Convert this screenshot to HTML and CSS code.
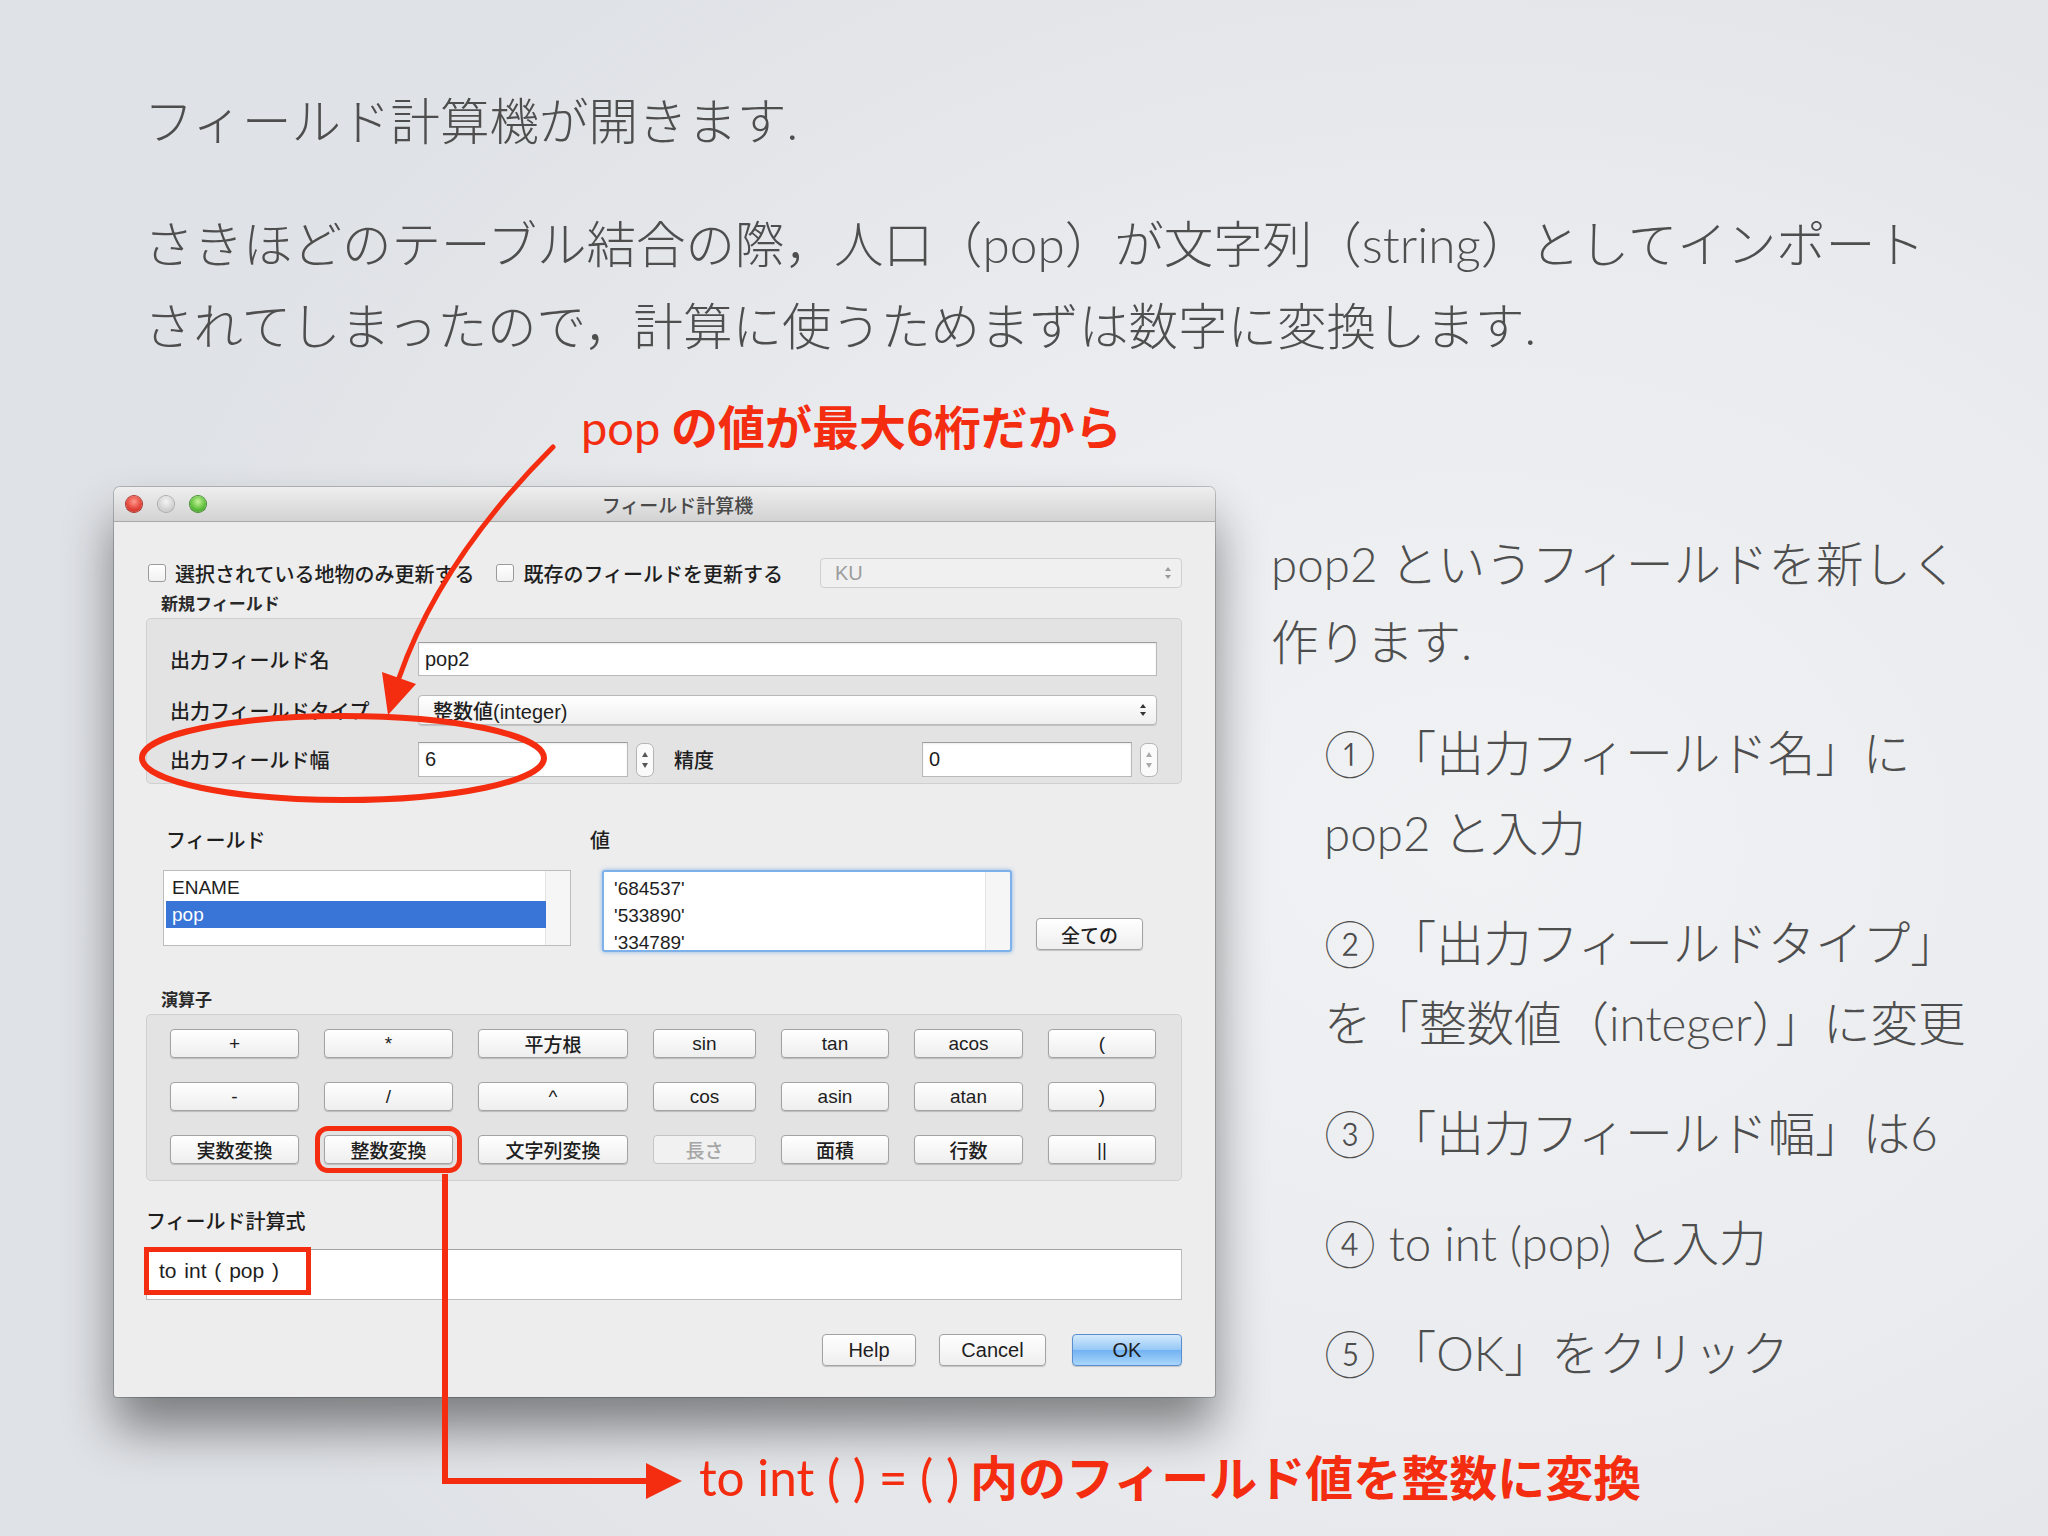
FILE: index.html
```html
<!DOCTYPE html>
<html lang="ja">
<head>
  <meta charset="UTF-8">
  <title>フィールド計算機</title>
  <link rel="stylesheet" href="styles.css">
</head>
<body>
<div class="slide">

  <div class="intro">
    <p>フィールド計算機が開きます.</p>
    <p>さきほどのテーブル結合の際，人口（pop）が文字列（string）としてインポート<br>されてしまったので，計算に使うためまずは数字に変換します.</p>
  </div>

  <div class="main">
    <div class="dialog">
      <div class="titlebar">
        <div class="lights">
          <span class="light red"></span>
          <span class="light gray"></span>
          <span class="light green"></span>
        </div>
        <div class="title">フィールド計算機</div>
      </div>

      <div class="dlg-body">
        <div class="opts">
          <label class="check"><span class="box"></span>選択されている地物のみ更新する</label>
          <label class="check"><span class="box"></span>既存のフィールドを更新する</label>
          <div class="combo disabled">
            <span>KU</span>
            <svg class="updown" width="8" height="14" viewBox="0 0 8 14"><path d="M1 5 L4 1 L7 5 Z M1 9 L4 13 L7 9 Z" fill="#9a9a9a"/></svg>
          </div>
        </div>

        <div class="group-label">新規フィールド</div>
        <div class="group new-field">
          <div class="frow">
            <span class="flabel">出力フィールド名</span>
            <div class="input">pop2</div>
          </div>
          <div class="frow type-row">
            <span class="flabel">出力フィールドタイプ</span>
            <div class="combo">
              <span>整数値(integer)</span>
              <svg class="updown" width="8" height="14" viewBox="0 0 8 14"><path d="M1 5 L4 1 L7 5 Z M1 9 L4 13 L7 9 Z" fill="#333"/></svg>
            </div>
          </div>
          <div class="frow width-row">
            <span class="flabel">出力フィールド幅</span>
            <div class="input spin">6</div>
            <svg class="stepper" width="18" height="34" viewBox="0 0 18 34"><rect x="0.5" y="0.5" width="17" height="33" rx="6" fill="#fafafa" stroke="#b3b3b3"/><path d="M6 14 L9 9 L12 14 Z M6 20 L9 25 L12 20 Z" fill="#555"/></svg>
            <span class="flabel plabel">精度</span>
            <div class="input spin">0</div>
            <svg class="stepper" width="18" height="34" viewBox="0 0 18 34"><rect x="0.5" y="0.5" width="17" height="33" rx="6" fill="#fafafa" stroke="#b3b3b3"/><path d="M6 14 L9 9 L12 14 Z M6 20 L9 25 L12 20 Z" fill="#aaa"/></svg>
          </div>
        </div>

        <div class="lists">
          <div class="col fields">
            <div class="sec-label">フィールド</div>
            <div class="listbox">
              <div class="item">ENAME</div>
              <div class="item selected">pop</div>
            </div>
          </div>
          <div class="col values">
            <div class="sec-label">値</div>
            <div class="listbox focus">
              <div class="item">'684537'</div>
              <div class="item">'533890'</div>
              <div class="item">'334789'</div>
            </div>
          </div>
          <button class="btn all">全ての</button>
        </div>

        <div class="group-label ops-label">演算子</div>
        <div class="group ops">
          <button class="btn">+</button>
          <button class="btn">*</button>
          <button class="btn">平方根</button>
          <button class="btn">sin</button>
          <button class="btn">tan</button>
          <button class="btn">acos</button>
          <button class="btn">(</button>
          <button class="btn">-</button>
          <button class="btn">/</button>
          <button class="btn">^</button>
          <button class="btn">cos</button>
          <button class="btn">asin</button>
          <button class="btn">atan</button>
          <button class="btn">)</button>
          <button class="btn">実数変換</button>
          <button class="btn marked">整数変換</button>
          <button class="btn">文字列変換</button>
          <button class="btn" disabled>長さ</button>
          <button class="btn">面積</button>
          <button class="btn">行数</button>
          <button class="btn">||</button>
        </div>

        <div class="sec-label expr-label">フィールド計算式</div>
        <div class="expr"><span class="mark">to int ( pop )</span></div>

        <div class="actions">
          <button class="btn help">Help</button>
          <button class="btn cancel">Cancel</button>
          <button class="btn ok">OK</button>
        </div>
      </div>
    </div>

    <div class="notes">
      <p class="lead">pop2 というフィールドを新しく<br>作ります.</p>
      <ol>
        <li>① 「出力フィールド名」に<br>pop2 と入力</li>
        <li>② 「出力フィールドタイプ」<br>を「整数値（integer）」に変更</li>
        <li>③ 「出力フィールド幅」は6</li>
        <li>④ to int (pop) と入力</li>
        <li>⑤ 「OK」をクリック</li>
      </ol>
    </div>
  </div>

  <div class="note note-top"><span class="lat">pop</span> の値が最大6桁だから</div>
  <div class="note note-bottom"><span class="lat">to int ( ) = ( )</span> 内のフィールド値を整数に変換</div>

  <svg class="marks" width="2048" height="1536" viewBox="0 0 2048 1536">
    <path d="M553 447 Q440 560 399 678" fill="none" stroke="#f42c10" stroke-width="5" stroke-linecap="round"/>
    <polygon points="388,715 416,684 382,672" fill="#f42c10"/>
    <ellipse cx="343" cy="758" rx="201" ry="42" fill="none" stroke="#f42c10" stroke-width="6"/>
    <path d="M445 1174 V1481 H650" fill="none" stroke="#f42c10" stroke-width="6"/>
    <polygon points="682,1481 646,1463 646,1499" fill="#f42c10"/>
  </svg>
</div>
</body>
</html>
```

FILE: styles.css
```css
* {
  box-sizing: border-box;
}
body {
  margin: 0;
  background: #e4e6e9;
}
.slide {
  position: relative;
  width: 2048px;
  height: 1536px;
  overflow: hidden;
  background: radial-gradient(ellipse 1400px 1100px at 72% 55%, #f1f2f4 0%, #e9ebee 55%, #dfe2e6 100%);
  font-family: "Lato", "Noto Sans CJK JP", sans-serif;
  font-weight: 300;
  color: #4e4e4e;
}

/* text on the slide */
.intro {
  padding: 80px 0 0 144px;
}
.intro p {
  margin: 0;
  font-size: 49.5px;
  line-height: 82px;
  white-space: nowrap;
}
.intro p + p {
  margin-top: 41px;
}
.main {
  display: flex;
  align-items: flex-start;
  margin-top: 120px;
  padding-left: 114px;
}
.notes {
  margin: 38px 0 0 56px;
  font-size: 47.5px;
  white-space: nowrap;
}
.notes .lead {
  margin: 0;
  line-height: 78px;
}
.notes ol {
  list-style: none;
  margin: 32px 0 0;
  padding-left: 53px;
}
.notes li {
  line-height: 80px;
}
.notes li + li {
  margin-top: 30px;
}

/* red annotations */
.note {
  position: absolute;
  font-family: "Noto Sans CJK JP", sans-serif;
  font-weight: 700;
  line-height: 56px;
  color: #f42c10;
  white-space: nowrap;
}
.note .lat {
  font-family: "Lato", "Noto Sans CJK JP", sans-serif;
  font-weight: 400;
}
.note-top {
  left: 581px;
  top: 397px;
  font-size: 47px;
}
.note-bottom {
  left: 699px;
  top: 1447px;
  font-size: 48px;
}
.note-bottom .lat {
  font-size: 49.5px;
}
.marks {
  position: absolute;
  left: 0;
  top: 0;
  pointer-events: none;
}

/* dialog window */
.dialog {
  width: 1101px;
  height: 910px;
  background: #ededed;
  border-radius: 6px 6px 3px 3px;
  box-shadow: 0 32px 50px rgba(0, 0, 0, 0.45), 0 0 0 1px rgba(0, 0, 0, 0.2);
  font-family: "Liberation Sans", "Noto Sans CJK JP", sans-serif;
  font-weight: 500;
  font-size: 20px;
  color: #1e1e1e;
}
.titlebar {
  display: flex;
  align-items: center;
  height: 35px;
  padding: 0 12px;
  background: linear-gradient(#eeeeee, #d3d3d3);
  border-bottom: 1px solid #a8a8a8;
  border-radius: 6px 6px 0 0;
}
.lights {
  display: flex;
  gap: 16px;
}
.light {
  width: 16px;
  height: 16px;
  border-radius: 50%;
}
.light.red {
  background: radial-gradient(circle at 50% 35%, #ff9a8e 0%, #e5463c 55%, #b7261d 100%);
  box-shadow: 0 0 0 1px #a8322a;
}
.light.gray {
  background: radial-gradient(circle at 50% 35%, #f4f4f4 0%, #d3d3d3 60%, #bdbdbd 100%);
  box-shadow: 0 0 0 1px #a9a9a9;
}
.light.green {
  background: radial-gradient(circle at 50% 35%, #c8f29c 0%, #62c23f 55%, #3c8f23 100%);
  box-shadow: 0 0 0 1px #3f8a2b;
}
.title {
  flex: 1;
  text-align: center;
  padding-right: 54px;
  font-size: 19px;
  color: #4a4a4a;
}
.dlg-body {
  padding: 36px 33px 0 32px;
}
.opts {
  display: flex;
  align-items: center;
  height: 30px;
  padding-left: 2px;
}
.check {
  display: flex;
  align-items: center;
  gap: 9px;
  margin-right: 22px;
  white-space: nowrap;
}
.check .box {
  width: 18px;
  height: 18px;
  border: 1px solid #9b9b9b;
  border-radius: 3px;
  background: linear-gradient(#ffffff, #f1f1f1);
}
.combo {
  display: flex;
  align-items: center;
  justify-content: space-between;
  height: 30px;
  padding: 0 9px 0 14px;
  border: 1px solid #b9b9b9;
  border-radius: 4px;
  background: linear-gradient(#ffffff, #efefef);
  box-shadow: 0 1px 1px rgba(0, 0, 0, 0.12);
}
.opts .combo {
  width: 362px;
  margin-left: auto;
}
.combo.disabled {
  color: #9c9c9c;
  border-color: #cfcfcf;
  background: #f0f0f0;
  box-shadow: none;
}
.group-label {
  margin: 7px 0 3px 15px;
  font-size: 17px;
  line-height: 20px;
  font-weight: 700;
  color: #2a2a2a;
}
.group {
  background: #e3e3e3;
  border: 1px solid #cfcfcf;
  border-radius: 5px;
}
.new-field {
  padding: 23px 24px 6px 23px;
}
.frow {
  display: flex;
  align-items: center;
  height: 34px;
}
.frow.type-row {
  height: 30px;
  margin-top: 19px;
}
.frow.width-row {
  height: 35px;
  margin-top: 17px;
}
.flabel {
  width: 248px;
  flex: none;
  white-space: nowrap;
}
.input {
  flex: 1;
  display: flex;
  align-items: center;
  height: 100%;
  padding-left: 6px;
  background: #ffffff;
  border: 1px solid #b9b9b9;
  border-top-color: #9d9d9d;
  box-shadow: inset 0 1px 2px rgba(0, 0, 0, 0.08);
}
.frow .combo {
  flex: 1;
  padding-left: 14px;
  box-shadow: 0 1px 1px rgba(0, 0, 0, 0.15);
}
.input.spin {
  flex: none;
  width: 210px;
}
.stepper {
  flex: none;
  margin-left: 8px;
}
.plabel {
  margin-left: 20px;
}

/* field / value lists */
.lists {
  display: flex;
  align-items: flex-start;
  margin-top: 45px;
}
.sec-label {
  font-size: 20px;
  line-height: 24px;
  margin-bottom: 17px;
}
.col.fields {
  width: 408px;
  margin-left: 17px;
}
.col.fields .sec-label {
  padding-left: 3px;
}
.col.values {
  width: 410px;
  margin-left: 31px;
}
.col.values .sec-label {
  margin-left: -12px;
}
.listbox {
  height: 76px;
  padding: 3px 24px 0 2px;
  background: #ffffff linear-gradient(to left, #f6f6f6 24px, #e3e3e3 24px, #e3e3e3 25px, transparent 25px);
  border: 1px solid #bcbcbc;
  font-size: 19px;
}
.listbox.focus {
  height: 82px;
  padding-left: 10px;
  border: 2px solid #7eb0ea;
  border-radius: 3px;
  box-shadow: 0 0 4px rgba(60, 130, 220, 0.55);
}
.item {
  height: 27px;
  line-height: 27px;
  padding-left: 6px;
}
.listbox.focus .item {
  padding-left: 0;
}
.item.selected {
  background: #3875d7;
  color: #ffffff;
}

/* buttons */
.btn {
  height: 29px;
  padding: 0;
  border: 1px solid #a3a3a3;
  border-radius: 4px;
  background: linear-gradient(#ffffff, #eeeeee);
  box-shadow: 0 1px 1px rgba(0, 0, 0, 0.18);
  font-family: "Liberation Sans", "Noto Sans CJK JP", sans-serif;
  font-weight: 500;
  font-size: 19px;
  color: #1e1e1e;
}
.btn:disabled {
  color: #a6a6a6;
  border-color: #c4c4c4;
  box-shadow: none;
  background: #f1f1f1;
}
.btn.all {
  width: 107px;
  height: 32px;
  margin: 89px 0 0 24px;
}
.ops-label {
  margin-top: 39px;
}
.ops {
  display: grid;
  grid-template-columns: 129px 129px 150px 103px 108px 109px 108px;
  grid-template-rows: repeat(3, 29px);
  column-gap: 25px;
  row-gap: 24px;
  padding: 14px 24px 16px 23px;
}
.btn.marked {
  outline: 5px solid #f42c10;
  outline-offset: 4px;
}
.expr-label {
  margin: 29px 0 0;
}
.expr {
  display: flex;
  align-items: flex-start;
  height: 51px;
  margin-top: 15px;
  background: #ffffff;
  border: 1px solid #bdbdbd;
  border-top-color: #a3a3a3;
}
.expr .mark {
  width: 167px;
  height: 48px;
  margin: -3px 0 0 -3px;
  padding-left: 10px;
  border: 5px solid #f42c10;
  line-height: 38px;
  font-size: 21px;
  word-spacing: 2px;
  white-space: nowrap;
}
.actions {
  display: flex;
  justify-content: flex-end;
  margin-top: 34px;
}
.actions .btn {
  height: 32px;
  font-size: 20px;
}
.btn.help {
  width: 94px;
}
.btn.cancel {
  width: 107px;
  margin-left: 23px;
}
.btn.ok {
  width: 110px;
  margin-left: 26px;
  border-color: #5a8ed1;
  background: linear-gradient(#d3e9fc 0%, #95c8f6 50%, #72b2f2 51%, #a9d6fb 100%);
}
```
